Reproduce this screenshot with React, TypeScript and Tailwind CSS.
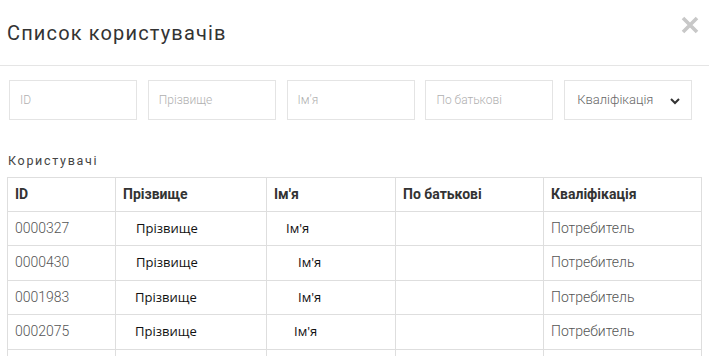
import React from "react";

const rows = [
  { id: "0000327", pl: "pl-[20px]", il: "pl-[19px]" },
  { id: "0000430", pl: "pl-[20px]", il: "pl-[31px]" },
  { id: "0001983", pl: "pl-[19px]", il: "pl-[31px]" },
  { id: "0002075", pl: "pl-[19px]", il: "pl-[27px]" },
  { id: "", pl: "pl-[19px]", il: "pl-[27px]" },
];

export default function App() {
  const inputCls =
    "w-[128px] h-[40px] border border-[#e4e4e4] px-[10px] text-[12px] font-light text-[#555] placeholder:text-[#b0b0b0] outline-none bg-white";
  return (
    <div
      className="w-[709px] h-[356px] overflow-hidden bg-white"
      style={{ fontFamily: "Roboto, 'Liberation Sans', sans-serif" }}
    >
      <div className="h-[66px] border-b border-[#e5e5e5] flex items-center justify-between pl-[7px] pr-[10px]">
        <h1 className="text-[20px] font-normal text-[#333] tracking-[1.15px] leading-none mt-[1px]">
          Список користувачів
        </h1>
        <svg width="18" height="18" viewBox="0 0 18 18" className="mt-[-16px]">
          <path d="M2 2 L16 16 M16 2 L2 16" stroke="#c8c8c8" strokeWidth="3.6" strokeLinecap="butt" />
        </svg>
      </div>

      <div className="flex gap-[10.8px] pl-[9px] mt-[14px]">
        <input className={inputCls} placeholder="ID" />
        <input className={inputCls} placeholder="Прізвище" />
        <input className={inputCls} placeholder="Ім’я" />
        <input className={inputCls} placeholder="По батькові" />
        <div className="relative w-[128px] h-[40px] border border-[#e4e4e4] flex items-center pl-[12px] text-[13px] font-light text-[#666]">
          Кваліфікація
          <svg
            width="10"
            height="7"
            viewBox="0 0 10 7"
            className="absolute right-[11px] top-[17px]"
          >
            <path d="M1 1 L5 5 L9 1" stroke="#333" strokeWidth="2" fill="none" />
          </svg>
        </div>
      </div>

      <div className="pl-[8px] mt-[35px] text-[12.5px] font-normal text-[#444] tracking-[1.7px] leading-none">
        Користувачі
      </div>

      <table className="ml-[7px] mt-[9px] border-collapse w-[694px] table-fixed">
        <colgroup>
          <col className="w-[108px]" />
          <col className="w-[151px]" />
          <col className="w-[129px]" />
          <col className="w-[148px]" />
          <col className="w-[158px]" />
        </colgroup>
        <thead>
          <tr className="h-[34px]">
            {["ID", "Прізвище", "Ім'я", "По батькові", "Кваліфікація"].map((h) => (
              <th
                key={h}
                className="border border-[#dedede] text-left pl-[7px] text-[14px] font-bold text-[#333] align-middle"
              >
                {h}
              </th>
            ))}
          </tr>
        </thead>
        <tbody>
          {rows.map((r, i) => (
            <tr key={i} className="h-[34.5px]">
              <td className="border border-[#dedede] pl-[7px] text-[14px] font-light text-[#555]">
                {r.id}
              </td>
              <td
                className={`border border-[#dedede] ${r.pl} text-[13px] text-[#111]`}
                style={{ fontFamily: "'Open Sans', 'Noto Sans', sans-serif" }}
              >
                {r.id ? "Прізвище" : ""}
              </td>
              <td
                className={`border border-[#dedede] ${r.il} text-[13px] text-[#111]`}
                style={{ fontFamily: "'Open Sans', 'Noto Sans', sans-serif" }}
              >
                {r.id ? "Ім'я" : ""}
              </td>
              <td className="border border-[#dedede]"></td>
              <td className="border border-[#dedede] pl-[7px] text-[14px] font-light text-[#555]">
                {r.id ? "Потребитель" : ""}
              </td>
            </tr>
          ))}
        </tbody>
      </table>
    </div>
  );
}
